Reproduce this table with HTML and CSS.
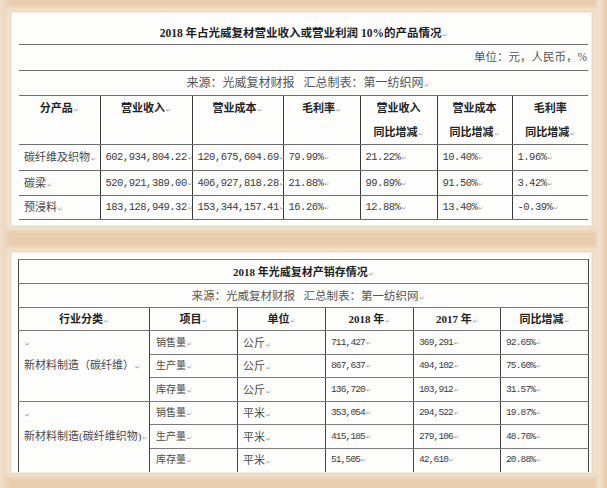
FILE: index.html
```html
<!DOCTYPE html>
<html lang="zh-CN">
<head>
<meta charset="utf-8">
<title>光威复材</title>
<link rel="stylesheet" href="styles.css">
</head>
<body>
<div class="frame">
  <div class="panel p1">
    <table class="t1">
      <colgroup>
        <col class="c81"><col class="c92"><col class="c91"><col class="c77"><col class="c77"><col class="c75"><col class="c76">
      </colgroup>
      <tr class="r-title"><td colspan="7" class="title">2018 年占光威复材营业收入或营业利润 10%的产品情况<span class="pm">↵</span></td></tr>
      <tr class="r-unit"><td colspan="7" class="unit">单位：元，人民币，%</td></tr>
      <tr class="r-src"><td colspan="7" class="src">来源：光威复材财报&nbsp;&nbsp; 汇总制表：第一纺织网<span class="pm">↵</span></td></tr>
      <tr class="r-head">
        <th>分产品<span class="pm">↵</span></th>
        <th>营业收入<span class="pm">↵</span></th>
        <th>营业成本<span class="pm">↵</span></th>
        <th>毛利率<span class="pm">↵</span></th>
        <th>营业收入<br>同比增减<span class="pm">↵</span></th>
        <th>营业成本<br>同比增减<span class="pm">↵</span></th>
        <th>毛利率<br>同比增减<span class="pm">↵</span></th>
      </tr>
      <tr class="r-d1">
        <td class="name">碳纤维及织物<span class="pm">↵</span></td>
        <td class="num">602,934,804.22<span class="pm">↵</span></td>
        <td class="num">120,675,604.69<span class="pm">↵</span></td>
        <td class="num">79.99%<span class="pm">↵</span></td>
        <td class="num">21.22%<span class="pm">↵</span></td>
        <td class="num">10.40%<span class="pm">↵</span></td>
        <td class="num">1.96%<span class="pm">↵</span></td>
      </tr>
      <tr class="r-d2">
        <td class="name">碳梁<span class="pm">↵</span></td>
        <td class="num">520,921,389.00<span class="pm">↵</span></td>
        <td class="num">406,927,818.28<span class="pm">↵</span></td>
        <td class="num">21.88%<span class="pm">↵</span></td>
        <td class="num">99.89%<span class="pm">↵</span></td>
        <td class="num">91.50%<span class="pm">↵</span></td>
        <td class="num">3.42%<span class="pm">↵</span></td>
      </tr>
      <tr class="r-d3">
        <td class="name">预浸料<span class="pm">↵</span></td>
        <td class="num">183,128,949.32<span class="pm">↵</span></td>
        <td class="num">153,344,157.41<span class="pm">↵</span></td>
        <td class="num">16.26%<span class="pm">↵</span></td>
        <td class="num">12.88%<span class="pm">↵</span></td>
        <td class="num">13.40%<span class="pm">↵</span></td>
        <td class="num">-0.39%<span class="pm">↵</span></td>
      </tr>
    </table>
  </div>

  <div class="panel p2">
    <table class="t2">
      <colgroup>
        <col class="k131"><col class="k88"><col class="k88"><col class="k88"><col class="k87"><col class="k88">
      </colgroup>
      <tr class="s-title"><td colspan="6" class="title">2018 年光威复材产销存情况<span class="pm">↵</span></td></tr>
      <tr class="s-src"><td colspan="6" class="src">来源：光威复材财报&nbsp;&nbsp; 汇总制表：第一纺织网<span class="pm">↵</span></td></tr>
      <tr class="s-head">
        <th>行业分类<span class="pm">↵</span></th>
        <th>项目<span class="pm">↵</span></th>
        <th>单位<span class="pm">↵</span></th>
        <th>2018 年<span class="pm">↵</span></th>
        <th>2017 年<span class="pm">↵</span></th>
        <th>同比增减<span class="pm">↵</span></th>
      </tr>
      <tr class="s-1">
        <td rowspan="3" class="grp g1"><span class="pm">↵</span><br>新材料制造（碳纤维）<span class="pm">↵</span></td>
        <td class="item">销售量<span class="pm">↵</span></td>
        <td class="name">公斤<span class="pm">↵</span></td>
        <td class="num">711,427<span class="pm">↵</span></td>
        <td class="num">369,291<span class="pm">↵</span></td>
        <td class="num">92.65%<span class="pm">↵</span></td>
      </tr>
      <tr class="s-2">
        <td class="item">生产量<span class="pm">↵</span></td>
        <td class="name">公斤<span class="pm">↵</span></td>
        <td class="num">867,637<span class="pm">↵</span></td>
        <td class="num">494,102<span class="pm">↵</span></td>
        <td class="num">75.60%<span class="pm">↵</span></td>
      </tr>
      <tr class="s-3">
        <td class="item">库存量<span class="pm">↵</span></td>
        <td class="name">公斤<span class="pm">↵</span></td>
        <td class="num">136,720<span class="pm">↵</span></td>
        <td class="num">103,912<span class="pm">↵</span></td>
        <td class="num">31.57%<span class="pm">↵</span></td>
      </tr>
      <tr class="s-4">
        <td rowspan="3" class="grp g2"><span class="pm">↵</span><br>新材料制造(碳纤维织物)<span class="pm">↵</span></td>
        <td class="item">销售量<span class="pm">↵</span></td>
        <td class="name">平米<span class="pm">↵</span></td>
        <td class="num">353,054<span class="pm">↵</span></td>
        <td class="num">294,522<span class="pm">↵</span></td>
        <td class="num">19.87%<span class="pm">↵</span></td>
      </tr>
      <tr class="s-5">
        <td class="item">生产量<span class="pm">↵</span></td>
        <td class="name">平米<span class="pm">↵</span></td>
        <td class="num">415,185<span class="pm">↵</span></td>
        <td class="num">279,106<span class="pm">↵</span></td>
        <td class="num">48.76%<span class="pm">↵</span></td>
      </tr>
      <tr class="s-6">
        <td class="item">库存量<span class="pm">↵</span></td>
        <td class="name">平米<span class="pm">↵</span></td>
        <td class="num">51,505<span class="pm">↵</span></td>
        <td class="num">42,610<span class="pm">↵</span></td>
        <td class="num">20.88%<span class="pm">↵</span></td>
      </tr>
    </table>
  </div>
</div>
</body>
</html>
```

FILE: styles.css
```css
html, body {
  margin: 0;
  padding: 0;
}
body {
  width: 607px;
  height: 488px;
  overflow: hidden;
  background: #e8ccad;
  font-family: "Liberation Serif", "Noto Sans CJK SC", serif;
  color: #484848;
}
.frame {
  display: flex;
  flex-direction: column;
  gap: 28px;
  padding: 13px 16px 16px 12px;
  background: linear-gradient(90deg, #f1e0cc 0px, #e9cdae 10px, #e9cdae 594px, #f3e3d1 600px, #e6c8a6 607px);
  height: 488px;
  box-sizing: border-box;
}
.panel {
  background: #fdfdfc;
  box-shadow: 0 0 0 1px #f4ebe1, 0 0 0 3px #efdcc7, 0 0 4px 5px rgba(248, 238, 226, 0.8);
  overflow: hidden;
  box-sizing: border-box;
}
.p1 {
  height: 212px;
  padding: 8px 3px 0 7px;
}
.p2 {
  height: 219px;
  padding: 6px 3px 0 6px;
}
table {
  border-collapse: collapse;
  table-layout: fixed;
}
td, th {
  padding: 0 5px;
  font-size: 11px;
  line-height: 14px;
  white-space: nowrap;
  overflow: visible;
  vertical-align: middle;
}
th {
  font-weight: bold;
  color: #222;
  text-align: center;
}
.pm {
  font-family: "DejaVu Sans", sans-serif;
  font-size: 6px;
  line-height: 0;
  color: #a0a0a0;
  font-weight: normal;
  margin-left: 1px;
}
.num {
  font-family: "Liberation Mono", monospace;
  font-size: 10.5px;
  letter-spacing: -0.5px;
  color: #3c3c3c;
}
.name, .item {
  color: #4a4a4a;
}
.title {
  text-align: center;
  font-weight: bold;
  font-size: 11.5px;
  color: #1e1e1e;
}
.src {
  text-align: center;
  color: #555;
}

/* table 1 */
.t1 { width: 569px; }
.c81 { width: 81px; }
.c92 { width: 92px; }
.c91 { width: 91px; }
.c77 { width: 77px; }
.c75 { width: 75px; }
.c76 { width: 76px; }
.t1 td, .t1 th {
  border-bottom: 1px solid #6e6e6e;
}
.t1 .r-head th + th,
.t1 .r-d1 td + td,
.t1 .r-d2 td + td,
.t1 .r-d3 td + td {
  border-left: 1px solid #3a3a3a;
}
.t1 .r-title td { height: 23px; padding-top: 2px; box-sizing: border-box; }
.t1 .r-unit td { height: 25px; }
.t1 .unit { text-align: right; padding-right: 1px; color: #555; font-size: 11.5px; }
.t1 .r-src td { height: 24px; }
.t1 .src { font-size: 12px; padding-left: 14px; }
.t1 .r-head th { height: 48px; vertical-align: top; line-height: 24px; }
.t1 .r-d1 td { height: 25px; }
.t1 .r-d2 td { height: 24px; }
.t1 .r-d3 td { height: 23px; }
.t1 .num { padding-left: 5px; }

/* table 2 */
.t2 { width: 570px; }
.k131 { width: 131px; }
.k88 { width: 88px; }
.k87 { width: 87px; }
.t2 td, .t2 th {
  border-top: 1px solid #7a7a7a;
  border-bottom: 1px solid #7a7a7a;
  border-left: 1px solid #474747;
  border-right: 1px solid #474747;
}
.t2 .s-title td { height: 23px; font-size: 11px; }
.t2 .s-src td { height: 23px; }
.t2 .src { font-size: 11.5px; padding-left: 14px; }
.t2 .s-head th { height: 22px; }
.t2 .s-1 td { height: 23px; }
.t2 .s-2 td { height: 22px; }
.t2 .s-3 td { height: 23px; }
.t2 .s-4 td { height: 22px; }
.t2 .s-5 td { height: 23px; }
.t2 .s-6 td { height: 30px; vertical-align: top; padding-top: 4px; }
.t2 .grp {
  vertical-align: top;
  line-height: 23px;
  color: #4a4a4a;
  padding: 0 0 0 5px;
}
.t2 .item { font-size: 10px; padding-left: 6px; }
.t2 .num {
  font-size: 9.5px;
  letter-spacing: -0.85px;
  padding-left: 5px;
}
```
